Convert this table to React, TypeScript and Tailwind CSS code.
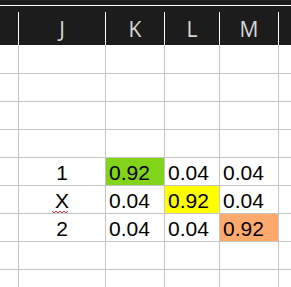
const cols = [
  { key: "", w: "w-[19px]" },
  { key: "J", w: "w-[87px]" },
  { key: "K", w: "w-[59px]" },
  { key: "L", w: "w-[55px]" },
  { key: "M", w: "w-[59px]" },
];

type Cell = { text?: string; bg?: string; center?: boolean; squiggle?: boolean };

const data: Record<number, Cell[]> = {
  4: [
    {},
    { text: "1", center: true },
    { text: "0.92", bg: "bg-[#81d41a]" },
    { text: "0.04" },
    { text: "0.04" },
  ],
  5: [
    {},
    { text: "X", center: true, squiggle: true },
    { text: "0.04" },
    { text: "0.92", bg: "bg-[#ffff00]" },
    { text: "0.04" },
  ],
  6: [
    {},
    { text: "2", center: true },
    { text: "0.04" },
    { text: "0.04" },
    { text: "0.92", bg: "bg-[#ffaa6c]" },
  ],
};

function Squiggle() {
  return (
    <svg
      className="absolute left-[-3px] bottom-[-3px]"
      width="16"
      height="4"
      viewBox="0 0 16 4"
    >
      <path
        d="M0 1 L2 3 L4 1 L6 3 L8 1 L10 3 L12 1 L14 3 L16 1"
        fill="none"
        stroke="#e0303a"
        strokeWidth="1"
      />
    </svg>
  );
}

export default function App() {
  const rows = Array.from({ length: 9 }, (_, i) => i);

  return (
    <div className="w-[291px] h-[287px] overflow-hidden bg-white font-['Liberation_Sans',Arial,sans-serif]">
      {/* column header */}
      <div className="bg-[#1c1c1c]">
        <div className="h-[5px]" />
        <div className="h-px bg-white" />
        <div className="flex h-[39px]">
          {cols.map((c) => (
            <div
              key={c.key || "corner"}
              className={`${c.w} mt-[6px] h-[33px] border-r border-white flex items-center justify-center pt-[3px] font-['Open_Sans',sans-serif] text-[21px] text-[#d6d6d6]`}
            >
              {c.key}
            </div>
          ))}
          <div className="flex-1" />
        </div>
      </div>

      {/* sheet body */}
      {rows.map((r) => {
        const cells = data[r];
        return (
          <div
            key={r}
            className={`flex border-b border-[#c6c6c6] ${r === 0 ? "h-[29px]" : "h-[28px]"}`}
          >
            {cols.map((c, ci) => {
              const cell = cells?.[ci];
              return (
                <div
                  key={ci}
                  className={`${c.w} border-r border-[#c6c6c6] flex items-center text-[21px] leading-none text-black ${
                    cell?.center ? "justify-center" : "pl-[3px]"
                  } ${cell?.bg ?? ""}`}
                >
                  {cell?.text && (
                    <span className="relative inline-block pt-[2px]">
                      {cell.text}
                      {cell.squiggle && <Squiggle />}
                    </span>
                  )}
                </div>
              );
            })}
            <div className="flex-1" />
          </div>
        );
      })}
    </div>
  );
}
